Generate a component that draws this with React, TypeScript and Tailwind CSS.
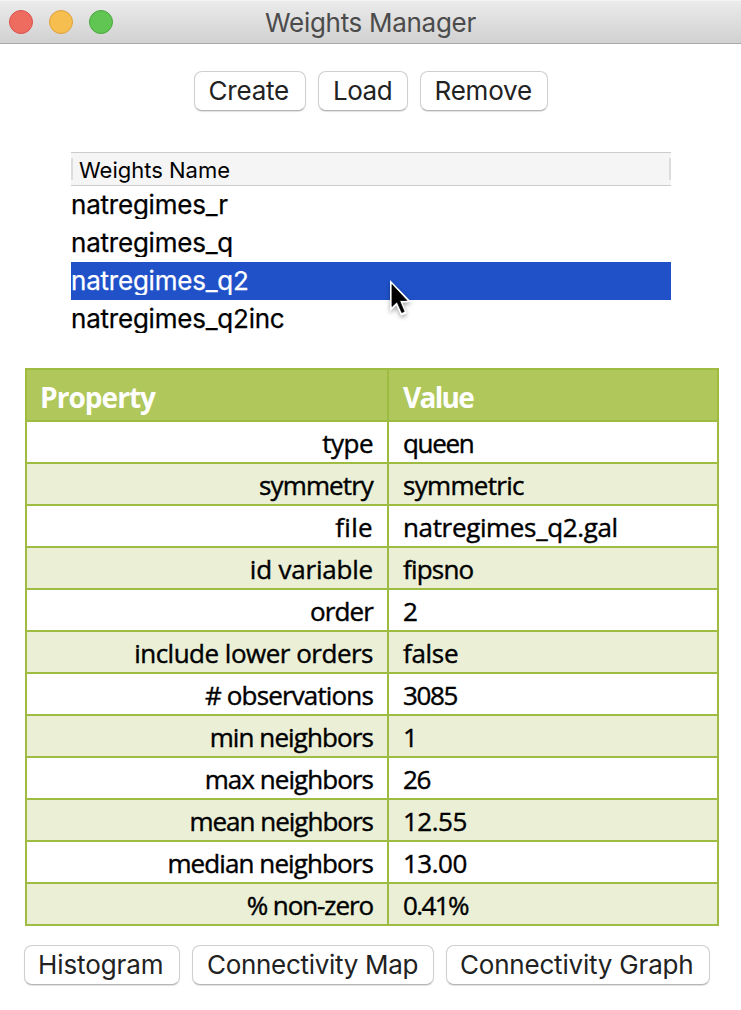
import type { ReactNode } from "react";

type Row = { name: string; value: string; nameClass: string; valueClass: string };

const weights = ["natregimes_r", "natregimes_q", "natregimes_q2", "natregimes_q2inc"];

const rows: Row[] = [
  { name: "type", value: "queen", nameClass: "tracking-[-0.5px]", valueClass: "tracking-[-1.3px]" },
  { name: "symmetry", value: "symmetric", nameClass: "tracking-[-0.9px]", valueClass: "tracking-[-0.7px]" },
  { name: "file", value: "natregimes_q2.gal", nameClass: "tracking-[0.3px]", valueClass: "tracking-[-0.35px]" },
  { name: "id variable", value: "fipsno", nameClass: "tracking-[-0.2px]", valueClass: "tracking-[-0.8px]" },
  { name: "order", value: "2", nameClass: "tracking-[-0.9px]", valueClass: "tracking-[-0.5px]" },
  { name: "include lower orders", value: "false", nameClass: "tracking-[-0.5px]", valueClass: "tracking-[-0.3px]" },
  { name: "# observations", value: "3085", nameClass: "tracking-[-0.85px]", valueClass: "tracking-[-1.4px]" },
  { name: "min neighbors", value: "1", nameClass: "tracking-[-0.9px]", valueClass: "tracking-[-0.5px]" },
  { name: "max neighbors", value: "26", nameClass: "tracking-[-0.95px]", valueClass: "tracking-[-1.3px]" },
  { name: "mean neighbors", value: "12.55", nameClass: "tracking-[-1px]", valueClass: "tracking-[-0.5px]" },
  { name: "median neighbors", value: "13.00", nameClass: "tracking-[-0.9px]", valueClass: "tracking-[-0.5px]" },
  { name: "% non-zero", value: "0.41%", nameClass: "tracking-[-1.1px]", valueClass: "tracking-[-1.6px]" },
];

function Button({ children, className }: { children: ReactNode; className: string }) {
  return (
    <button
      className={`h-10 rounded-[8px] border border-[#cfcfcf] border-b-[#b5b5b5] bg-white text-left text-[26px] leading-[38px] whitespace-nowrap text-[#222] shadow-[0_1px_1px_rgba(0,0,0,0.12)] ${className}`}
    >
      {children}
    </button>
  );
}

function Cursor() {
  return (
    <svg
      className="drop-shadow-[0_2px_2px_rgba(0,0,0,0.35)]"
      width="26"
      height="40"
      viewBox="0 0 26 40"
    >
      <path d="M4 1 L4 32.5 L10.3 26.5 L15 36.8 L20.8 34.4 L16.4 23.8 L25.4 23 Z" fill="#fff" />
      <path
        d="M6 5.6 L6 27.5 L11 22.8 L15.8 33.5 L18.2 32.5 L13.6 21.6 L20.8 21.4 Z"
        fill="#000"
        stroke="#000"
        strokeWidth="0.8"
      />
    </svg>
  );
}

export default function App() {
  return (
    <div className="flex h-[1010px] w-[741px] flex-col bg-white font-['Inter',sans-serif] text-black">
      <header className="grid h-11 shrink-0 grid-cols-[1fr_auto_1fr] border-t border-b border-t-[#f5f5f5] border-b-[#a9a9a9] bg-linear-to-b from-[#ebebeb] to-[#d1d1d1]">
        <div className="flex h-[42px] items-center gap-4 pl-[9px]">
          <span className="size-6 rounded-full border border-[#d9534c] bg-[#ee6b60]" />
          <span className="size-6 rounded-full border border-[#dea03c] bg-[#f6be4f]" />
          <span className="size-6 rounded-full border border-[#4aa73f] bg-[#61c554]" />
        </div>
        <h1 className="h-[42px] text-[26px] leading-[44px] tracking-[-0.3px] text-[#4b4b4b]">Weights Manager</h1>
      </header>

      <div className="mt-[27px] flex justify-center gap-3">
        <Button className="w-28 pl-[14px] tracking-[-0.2px]">Create</Button>
        <Button className="w-[90px] pl-[14.5px] tracking-[-0.5px]">Load</Button>
        <Button className="w-32 pl-[14px] tracking-[-0.2px]">Remove</Button>
      </div>

      <section className="relative mt-[41px] ml-[71px] w-[600px]">
        <div className="flex h-[34px] items-center justify-between border-y border-[#cccccc] bg-[#f5f5f5]">
          <span className="h-[22px] w-[2px] bg-[#dcdcdc]" />
          <span className="grow pt-[2px] pl-[6px] text-[22px] leading-[30px]">Weights Name</span>
          <span className="h-[22px] w-[2px] bg-[#dcdcdc]" />
        </div>
        {weights.map((w) => (
          <div key={w} className={`h-[38px] ${w === "natregimes_q2" ? "bg-[#2051c9] text-white" : ""}`}>
            <div className="h-[33px] overflow-hidden text-[26px] leading-[37px] tracking-[-0.22px] [-webkit-text-stroke:0.25px_currentColor]">
              {w}
            </div>
          </div>
        ))}
        <div className="absolute top-[127px] left-[315px]">
          <Cursor />
        </div>
      </section>

      <table className="mt-[30px] ml-[25px] w-[694px] table-fixed border-separate border-spacing-0 border-t-2 border-l-2 border-[#9fbc42] font-['Open_Sans',sans-serif] text-[26px]">
        <colgroup>
          <col className="w-[362px]" />
          <col />
        </colgroup>
        <thead>
          <tr className="bg-[#afc75b] text-left text-[28px] text-white">
            <th className="border-r-2 border-b-2 border-[#9fbc42] py-0 pr-0 pl-[13px] font-bold tracking-[-0.95px]">
              <div className="h-[50px] leading-[54px]">Property</div>
            </th>
            <th className="border-r-2 border-b-2 border-[#9fbc42] py-0 pr-0 pl-[14px] font-bold tracking-[-1.7px]">
              <div className="h-[50px] leading-[54px]">Value</div>
            </th>
          </tr>
        </thead>
        <tbody className="[-webkit-text-stroke:0.4px_currentColor]">
          {rows.map((r) => (
            <tr key={r.name} className="even:bg-[#eaefd6]">
              <td className={`border-r-2 border-b-2 border-[#9fbc42] p-0 pr-[14px] text-right ${r.nameClass}`}>
                <div className="h-10 leading-[43px]">{r.name}</div>
              </td>
              <td className={`border-r-2 border-b-2 border-[#9fbc42] p-0 pl-[14px] ${r.valueClass}`}>
                <div className="h-10 leading-[43px]">{r.value}</div>
              </td>
            </tr>
          ))}
        </tbody>
      </table>

      <div className="mt-[19px] ml-6 flex gap-3">
        <Button className="w-[156px] pl-[13px] tracking-[-0.1px]">Histogram</Button>
        <Button className="w-[242px] pl-[14px] tracking-[-0.3px]">Connectivity Map</Button>
        <Button className="w-[264px] pl-[13px] tracking-[-0.2px]">Connectivity Graph</Button>
      </div>
    </div>
  );
}
